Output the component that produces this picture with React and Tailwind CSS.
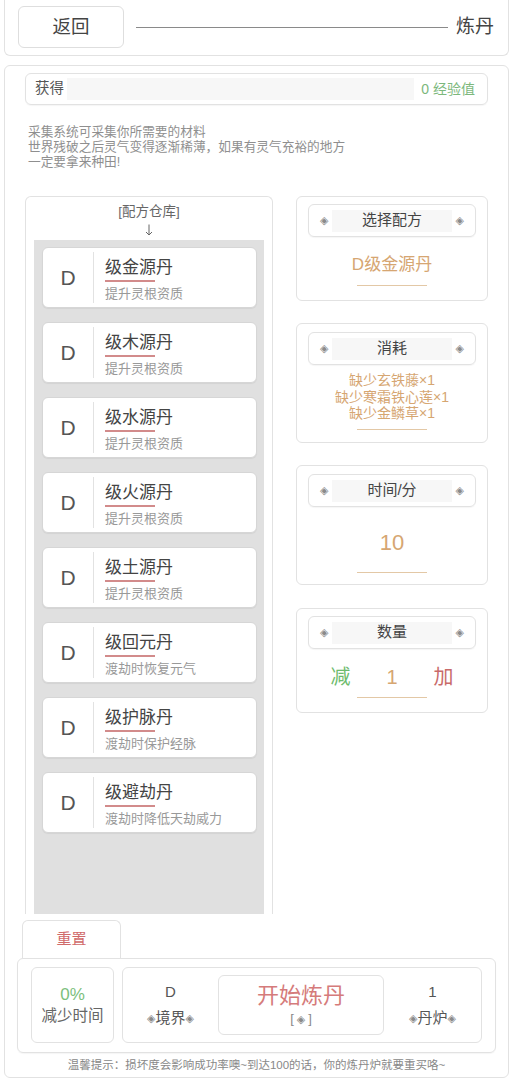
const recipes = [
  { name: '级金源丹', desc: '提升灵根资质' },
  { name: '级木源丹', desc: '提升灵根资质' },
  { name: '级水源丹', desc: '提升灵根资质' },
  { name: '级火源丹', desc: '提升灵根资质' },
  { name: '级土源丹', desc: '提升灵根资质' },
  { name: '级回元丹', desc: '渡劫时恢复元气' },
  { name: '级护脉丹', desc: '渡劫时保护经脉' },
  { name: '级避劫丹', desc: '渡劫时降低天劫威力' },
];

const Dia = ({ className = '' }) => (
  <span className={`font-['DejaVu_Sans',sans-serif] text-[11px] leading-none text-[#8a8a8a] ${className}`}>◈</span>
);

const PanelHead = ({ title }) => (
  <div className="mx-[11px] h-[33px] border border-[#e2e2e2] rounded-md flex items-center px-[11px] shadow-[0_1px_1px_rgba(0,0,0,0.04)]">
    <Dia />
    <div className="flex-1 mx-[4px] h-[22px] bg-[#f7f7f7] flex items-center justify-center text-[15px] text-[#444]">
      {title}
    </div>
    <Dia />
  </div>
);

const Underline = ({ className = '' }) => (
  <div className={`mx-auto w-[70px] h-px bg-[#e3c8a6] ${className}`} />
);

const RecipeCard = ({ r }) => (
  <div className="h-[61px] bg-white border border-[#d6d6d6] rounded-md flex shadow-[0_1px_1px_rgba(0,0,0,0.06)]">
    <div className="w-[50px] flex items-center justify-center text-[21px] text-[#555]">D</div>
    <div className="w-px bg-[#e2e2e2] my-[4px]" />
    <div className="pl-[11px] pt-[9px]">
      <div className="text-[17px] leading-[22px] text-[#444]">{r.name}</div>
      <div className="w-[50px] h-[2px] bg-[#d28b8b] mt-[1px]" />
      <div className="text-[13px] leading-[18px] text-[#999] mt-[3px]">{r.desc}</div>
    </div>
  </div>
);

export default function App() {
  return (
    <div className="w-[513px] bg-white font-['Liberation_Sans','Noto_Sans_CJK_SC',sans-serif] text-[#444]">
      {/* header */}
      <div className="mx-[4px] h-[56px] border-x border-b border-[#e2e2e2] rounded-b-md flex items-start">
        <div className="ml-[13px] mt-[6px] w-[106px] h-[42px] border border-[#dedede] rounded-md flex items-center justify-center text-[18.5px] text-[#444]">
          返回
        </div>
        <div className="flex-1 ml-[12px] mr-[8px] mt-[27px] h-px bg-[#8a8a8a]" />
        <div className="mr-[14px] mt-[14px] text-[19px] leading-[26px] text-[#444]">炼丹</div>
      </div>

      {/* main card */}
      <div className="mx-[4px] mt-[9px] border border-[#e2e2e2] rounded-md px-[20px] pt-[7px] pb-[4px]">
        <div className="h-[32px] border border-[#e2e2e2] rounded-md flex items-center pl-[9px] pr-[12px] shadow-[0_1px_1px_rgba(0,0,0,0.04)]">
          <span className="text-[14.5px] text-[#555] w-[32px]">获得</span>
          <div className="flex-1 h-[22px] bg-[#f7f7f7]" />
          <span className="ml-[7px] text-[14px] text-[#7cb87c]">0 经验值</span>
        </div>

        <div className="mt-[20px] pl-[3px] text-[12.7px] leading-[15px] text-[#8f8f8f]">
          <div>采集系统可采集你所需要的材料</div>
          <div>世界残破之后灵气变得逐渐稀薄，如果有灵气充裕的地方</div>
          <div>一定要拿来种田!</div>
        </div>

        <div className="mt-[26px] flex gap-[23px] items-start">
          {/* left list */}
          <div className="w-[248px] h-[718px] border-x border-t border-[#e2e2e2] rounded-t-md flex flex-col">
            <div className="text-center text-[13.5px] leading-[18px] text-[#666] mt-[6px]">[配方仓库]</div>
            <div className="mt-[3px] h-[14px] flex justify-center">
              <svg width="8" height="12" viewBox="0 0 8 12" fill="none" stroke="#666" strokeWidth="1">
                <path d="M4 0.5V11" />
                <path d="M1 8L4 11L7 8" />
              </svg>
            </div>
            <div className="flex-1 mx-[8px] mt-[2px] bg-[#e0e0e0] pt-[7px] pl-[8px] pr-[7px] flex flex-col gap-[14px]">
              {recipes.map((r) => (
                <RecipeCard key={r.name} r={r} />
              ))}
            </div>
          </div>

          {/* right column */}
          <div className="w-[192px] flex flex-col">
            <div className="h-[105px] border border-[#e2e2e2] rounded-md pt-[7px]">
              <PanelHead title="选择配方" />
              <div className="mt-[16px] text-center text-[17px] leading-[24px] text-[#d6a672]">D级金源丹</div>
              <Underline className="mt-[8px]" />
            </div>

            <div className="mt-[22px] h-[120px] border border-[#e2e2e2] rounded-md pt-[8px]">
              <PanelHead title="消耗" />
              <div className="mt-[7px] text-center text-[14px] leading-[16.5px] text-[#d6a672]">
                <div>缺少玄铁藤×1</div>
                <div>缺少寒霜铁心莲×1</div>
                <div>缺少金鳞草×1</div>
              </div>
              <Underline className="mt-[7px]" />
            </div>

            <div className="mt-[22px] h-[120px] border border-[#e2e2e2] rounded-md pt-[8px]">
              <PanelHead title="时间/分" />
              <div className="mt-[22px] text-center text-[22px] leading-[28px] text-[#d6a672]">10</div>
              <Underline className="mt-[15px]" />
            </div>

            <div className="mt-[23px] h-[105px] border border-[#e2e2e2] rounded-md pt-[7px]">
              <PanelHead title="数量" />
              <div className="mt-[15px] flex items-center justify-center text-[20px] leading-[26px]">
                <span className="text-[#6dbb6d]">减</span>
                <span className="mx-[36px] text-[#d6a672]">1</span>
                <span className="text-[#c86a6a]">加</span>
              </div>
              <Underline className="mt-[7px]" />
            </div>
          </div>
        </div>

        {/* bottom */}
        <div className="-mx-[8px] mt-[6px]">
          <div className="ml-[5px] w-[99px] h-[38px] border-x border-t border-[#e2e2e2] rounded-t-md flex items-center justify-center text-[15px] text-[#d06a6a]">
            重置
          </div>
          <div className="h-[95px] border border-[#e2e2e2] rounded-md flex gap-[8px] px-[13px] pt-[8px] shadow-[0_1px_1px_rgba(0,0,0,0.04)]">
            <div className="w-[83px] h-[76px] border border-[#e2e2e2] rounded-md flex flex-col items-center justify-center">
              <div className="text-[17px] leading-[20px] text-[#7cc07c]">0%</div>
              <div className="text-[15.5px] leading-[21px] text-[#666]">减少时间</div>
            </div>
            <div className="flex-1 h-[76px] border border-[#e2e2e2] rounded-md flex items-center">
              <div className="w-[95px] flex flex-col items-center">
                <div className="text-[15px] leading-[20px] text-[#555]">D</div>
                <div className="mt-[6px] flex items-center text-[15px] leading-[20px] text-[#555]">
                  <Dia className="text-[10px]" />境界<Dia className="text-[10px]" />
                </div>
              </div>
              <div className="w-[166px] h-[60px] border border-[#e2e2e2] rounded-md flex flex-col items-center justify-center">
                <div className="text-[22px] leading-[28px] text-[#d57b7b]">开始炼丹</div>
                <div className="text-[13px] leading-[18px] text-[#888] flex items-center">
                  [<Dia className="text-[10px] mx-[3px]" />]
                </div>
              </div>
              <div className="flex-1 flex flex-col items-center">
                <div className="text-[15px] leading-[20px] text-[#555]">1</div>
                <div className="mt-[6px] flex items-center text-[15px] leading-[20px] text-[#555]">
                  <Dia className="text-[10px]" />丹炉<Dia className="text-[10px]" />
                </div>
              </div>
            </div>
          </div>
        </div>

        <div className="mt-[4px] text-center text-[11.5px] leading-[16px] text-[#888] whitespace-nowrap">
          温馨提示：损坏度会影响成功率噢~到达100的话，你的炼丹炉就要重买咯~
        </div>
      </div>
    </div>
  );
}
